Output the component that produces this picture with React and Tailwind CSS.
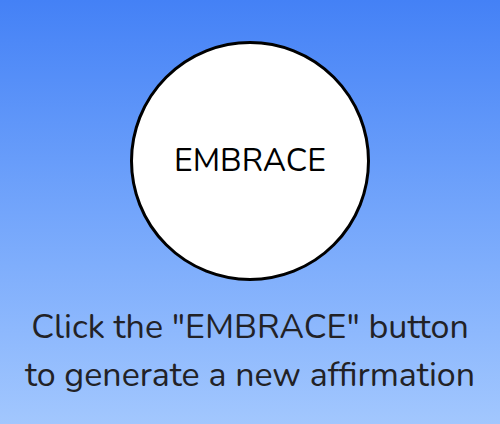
export default function App() {
  return (
    <div className="flex h-[424px] w-full flex-col items-center bg-gradient-to-b from-[#4481f6] to-[#a2c7fe] font-['Nunito','Lato',sans-serif] text-[#222226]">
      <button className="mt-[41px] flex h-[240px] w-[240px] items-center justify-center rounded-full border-[3px] border-black bg-white text-[32px] text-black">
        EMBRACE
      </button>
      <p className="mt-[22px] text-center text-[34px] leading-[48px]">
        Click the "EMBRACE" button
        <br />
        to generate a new affirmation
      </p>
    </div>
  );
}
